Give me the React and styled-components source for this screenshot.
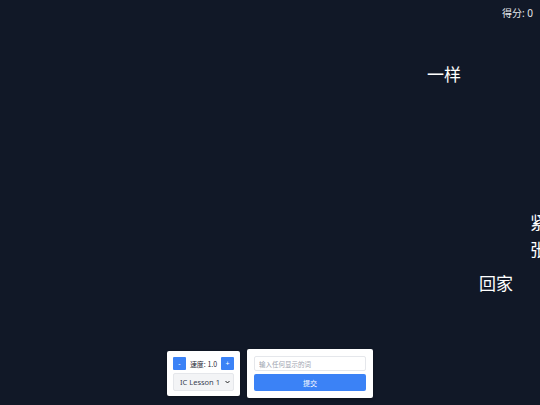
import React, { useState } from "react";
import styled, { createGlobalStyle } from "styled-components";

const GlobalStyle = createGlobalStyle`
  html, body {
    margin: 0;
    padding: 0;
    background: #111827;
  }
  body {
    font-family: "Noto Sans", "Noto Sans CJK SC", sans-serif;
  }
`;

const Stage = styled.div`
  position: relative;
  width: 100vw;
  height: 100vh;
  overflow: hidden;
  background: #111827;
  display: flex;
  flex-direction: column;
  justify-content: flex-end;
  align-items: center;
  padding-bottom: 7px;
  box-sizing: border-box;
`;

const Score = styled.div`
  position: absolute;
  top: 5px;
  right: 7px;
  font-size: 10px;
  line-height: 16px;
  color: #e5e7eb;
`;

const Word = styled.div`
  position: absolute;
  font-family: "Noto Sans CJK SC", sans-serif;
  font-size: 17px;
  line-height: 27px;
  color: #ffffff;
  white-space: normal;
  word-break: break-all;
`;

const Controls = styled.div`
  display: flex;
  align-items: center;
  gap: 7px;
  position: relative;
  z-index: 1;
`;

const Panel = styled.div`
  background: #ffffff;
  border-radius: 2px;
  box-shadow: 0 1px 3px rgba(0, 0, 0, 0.3);
  padding: ${(p) => p.pad};
  width: ${(p) => p.w};
  display: flex;
  flex-direction: column;
  gap: 3px;
  box-sizing: border-box;
`;

const SpeedRow = styled.div`
  display: flex;
  align-items: center;
  justify-content: space-between;
  height: 13px;
`;

const SmallButton = styled.button`
  width: 13px;
  height: 13px;
  padding: 0;
  border: none;
  border-radius: 1px;
  background: #3b82f6;
  color: #ffffff;
  font-size: 7px;
  line-height: 13px;
  font-family: inherit;
`;

const SpeedLabel = styled.span`
  font-size: 7px;
  color: #1f2937;
  font-family: "Noto Sans CJK SC", sans-serif;
`;

const SelectWrap = styled.div`
  position: relative;
  height: 18px;
`;

const Select = styled.select`
  display: block;
  box-sizing: border-box;
  appearance: none;
  -webkit-appearance: none;
  width: 100%;
  height: 18px;
  margin: 0;
  padding: 0 0 0 6px;
  border: 1px solid #e5e7eb;
  border-radius: 2px;
  background: #f3f4f6;
  color: #374151;
  font-size: 7.5px;
  font-family: "Noto Sans", sans-serif;
  outline: none;
`;

const Chevron = styled.svg`
  position: absolute;
  right: 4px;
  top: 7px;
  width: 5px;
  height: 4px;
  pointer-events: none;
`;

const Input = styled.input`
  height: 15px;
  padding: 0 4px;
  border: 1px solid #e5e7eb;
  border-radius: 2px;
  font-size: 6.5px;
  font-family: "Noto Sans CJK SC", sans-serif;
  box-sizing: border-box;
  outline: none;
  &::placeholder {
    color: #9ca3af;
  }
`;

const Submit = styled.button`
  height: 17px;
  border: none;
  border-radius: 2px;
  background: #3b82f6;
  color: #ffffff;
  font-size: 7px;
  font-family: "Noto Sans CJK SC", sans-serif;
  padding: 0;
`;

const words = [
  { text: "一样", x: 427, y: 60 },
  { text: "紧张", x: 530, y: 208 },
  { text: "回家", x: 479, y: 269 },
];

export default function App() {
  const [speed] = useState(1.0);
  return (
    <>
      <GlobalStyle />
      <Stage>
        <Score>得分: 0</Score>
        {words.map((w) => (
          <Word key={w.text} style={{ left: w.x, top: w.y, width: 540 - w.x }}>
            {w.text}
          </Word>
        ))}
        <Controls>
          <Panel pad="6px 6px 5px" w="73px">
            <SpeedRow>
              <SmallButton>-</SmallButton>
              <SpeedLabel>速度: {speed.toFixed(1)}</SpeedLabel>
              <SmallButton>+</SmallButton>
            </SpeedRow>
            <SelectWrap>
              <Select defaultValue="IC Lesson 1">
                <option>IC Lesson 1</option>
                <option>IC Lesson 2</option>
              </Select>
              <Chevron viewBox="0 0 10 6">
                <path d="M1 1l4 4 4-4" fill="none" stroke="#111" strokeWidth="1.8" />
              </Chevron>
            </SelectWrap>
          </Panel>
          <Panel pad="7px" w="126px">
            <Input placeholder="输入任何显示的词" />
            <Submit>提交</Submit>
          </Panel>
        </Controls>
      </Stage>
    </>
  );
}
